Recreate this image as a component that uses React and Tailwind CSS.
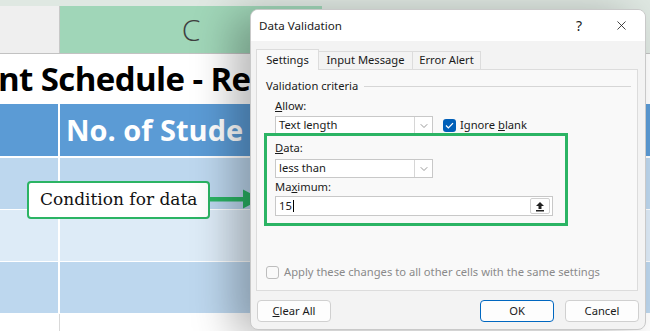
import { ChevronDown, X } from 'lucide-react';

const ui = { fontFamily: '"Noto Sans", "Open Sans", sans-serif' };

function Select({ value }) {
  return (
    <div className="flex h-[19px] w-[158px] items-stretch border border-[#c8c8c8] bg-white">
      <div className="flex flex-1 items-center pl-[3px] text-[#1a1a1a]">{value}</div>
      <div className="flex w-[18px] items-center justify-center border-l border-[#d6d6d6]">
        <ChevronDown className="h-3 w-3 text-[#777]" strokeWidth={1.5} />
      </div>
    </div>
  );
}

export default function App() {
  return (
    <div className="relative h-[331px] w-[650px] overflow-hidden bg-white" style={ui}>
      {/* sheet */}
      <div className="flex flex-col">
        <div className="h-[6px] bg-[#dfe8e2]" />
        <div className="flex h-[48px] border-b border-[#c2c2c2]">
          <div className="w-[60px] border-r border-[#c8c8c8] bg-[#efefef]" />
          <div className="flex w-[262px] items-center justify-center bg-[#a0d6b8] text-[30px] text-[#3f3f3f]" style={{ fontFamily: '"Open Sans", sans-serif', fontWeight: 300 }}>
            C
          </div>
          <div className="flex-1 bg-[#dfe8e2]" />
        </div>
        <div className="flex h-[50px] items-center overflow-hidden">
          <span className="-ml-[2px] whitespace-nowrap text-[33px] font-bold tracking-[-0.6px] text-black" style={{ fontFamily: '"Open Sans", sans-serif' }}>
            nt Schedule - Re
          </span>
        </div>
        <div className="flex h-[54px] border-b-2 border-white bg-[#5b9bd5]">
          <div className="w-[60px] border-r-2 border-white" />
          <div className="flex items-center whitespace-nowrap pl-[6px] text-[29px] font-bold text-white" style={{ fontFamily: '"Open Sans", sans-serif' }}>
            No. of Stude
          </div>
        </div>
        {['bg-[#bdd7ee]', 'bg-[#ddebf7]', 'bg-[#bdd7ee]'].map((c, i) => (
          <div key={i} className={`flex h-[52px] border-b border-white ${c}`}>
            <div className="w-[60px] border-r-2 border-white" />
          </div>
        ))}
        <div className="flex h-[20px]">
          <div className="w-[60px] border-r border-[#d9d9d9]" />
        </div>
      </div>

      {/* callout */}
      <div className="absolute left-[27px] top-[181px] flex items-center">
        <div className="flex h-[38px] items-center rounded-[4px] border-2 border-[#2bb464] bg-white px-[11px] text-[17px] text-[#111]" style={{ fontFamily: 'Georgia, "DejaVu Serif", "Liberation Serif", serif' }}>
          Condition for data
        </div>
        <svg width="52" height="20" viewBox="0 0 52 20" className="-ml-[1px] -mt-[2px]">
          <rect x="0" y="8" width="36" height="4.5" fill="#2bb464" />
          <polygon points="34,0.5 52,10 34,19.5" fill="#2bb464" />
        </svg>
      </div>

      {/* dialog */}
      <div className="absolute left-[250px] top-[9px] flex h-[321px] w-[396px] flex-col overflow-hidden rounded-[8px] border border-[#c9c9c9] bg-[#f3f3f3] text-[11.2px] shadow-[-18px_6px_40px_rgba(0,0,0,0.28)]">
        <div className="flex h-[31px] items-center bg-white pl-[8px] pr-[16px] text-[#1a1a1a]">
          <span className="flex-1 text-[11.6px]">Data Validation</span>
          <span className="mr-[32px] text-[14px]">?</span>
          <X className="h-[15px] w-[15px]" strokeWidth={1.3} />
        </div>
        <div className="flex flex-1 flex-col px-[5px] pt-[8px]">
          <div className="flex h-[21px] text-[#1a1a1a]">
            <div className="relative z-10 flex w-[63px] items-center justify-center border border-b-0 border-[#dcdcdc] bg-[#f9f9f9]">Settings</div>
            <div className="mt-[2px] flex w-[94px] items-center justify-center border border-l-0 border-[#dcdcdc]">Input Message</div>
            <div className="mt-[2px] flex w-[68px] items-center justify-center border border-l-0 border-[#dcdcdc]">Error Alert</div>
          </div>
          <div className="-mt-px mr-[2px] flex h-[222px] flex-col border border-[#dcdcdc] bg-[#f9f9f9] pl-[9px] pr-[6px] text-[#1a1a1a]">
            <div className="mt-[8px] flex items-center gap-[6px] leading-[16px]">
              <span>Validation criteria</span>
              <div className="h-px flex-1 bg-[#d6d6d6]" />
            </div>
            <div className="ml-[9px] mt-[4px] leading-[16px]"><span className="underline">A</span>llow:</div>
            <div className="ml-[9px] mt-[2px] flex items-center gap-[10px]">
              <Select value="Text length" />
              <div className="flex h-[13px] w-[13px] items-center justify-center rounded-[3px] bg-[#005fb8]">
                <svg width="9" height="7" viewBox="0 0 10 8"><path d="M1 4l2.7 2.7L9 1.3" stroke="white" strokeWidth="1.5" fill="none" /></svg>
              </div>
              <span className="-ml-[6px]">Ignore <span className="underline">b</span>lank</span>
            </div>
            <div className="relative -ml-[2px] -mt-[2px] w-[304px] border-[3px] border-[#2bb464] pb-[7px] pl-[8px] pt-[4px]">
              <div className="leading-[16px]"><span className="underline">D</span>ata:</div>
              <div className="mt-[3px]"><Select value="less than" /></div>
              <div className="mt-[1px] leading-[16px]">Ma<span className="underline">x</span>imum:</div>
              <div className="mt-[1px] flex h-[20px] w-[278px] items-center border border-[#c8c8c8] bg-white pl-[3px] pr-[2px]">
                <span className="flex-1">15<span className="ml-px inline-block h-[12px] w-px translate-y-[2px] bg-black" /></span>
                <div className="flex h-[16px] w-[20px] items-center justify-center rounded-[2px] border border-[#d0d0d0] bg-white">
                  <svg width="10" height="11" viewBox="0 0 10 11"><path d="M5 1L1 5h2.5v3h3V5H9z" fill="#222" /><rect x="1" y="9" width="8" height="1.5" fill="#222" /></svg>
                </div>
              </div>
            </div>
            <div className="mb-[9px] mt-auto flex items-center gap-[5px] text-[#8a8a8a]">
              <div className="h-[13px] w-[13px] rounded-[3px] border border-[#bdbdbd] bg-[#f9f9f9]" />
              <span>Apply these changes to all other cells with the same settings</span>
            </div>
          </div>
          <div className="mt-[9px] flex items-center text-[#1a1a1a]">
            <button className="ml-[1px] h-[22px] w-[74px] rounded-[4px] border border-[#d0d0d0] bg-[#fdfdfd]"><span className="underline">C</span>lear All</button>
            <div className="flex-1" />
            <button className="h-[22px] w-[74px] rounded-[4px] border border-[#0067c0] bg-[#fdfdfd]">OK</button>
            <button className="ml-[11px] mr-[1px] h-[22px] w-[74px] rounded-[4px] border border-[#d0d0d0] bg-[#fdfdfd]">Cancel</button>
          </div>
        </div>
      </div>
    </div>
  );
}
